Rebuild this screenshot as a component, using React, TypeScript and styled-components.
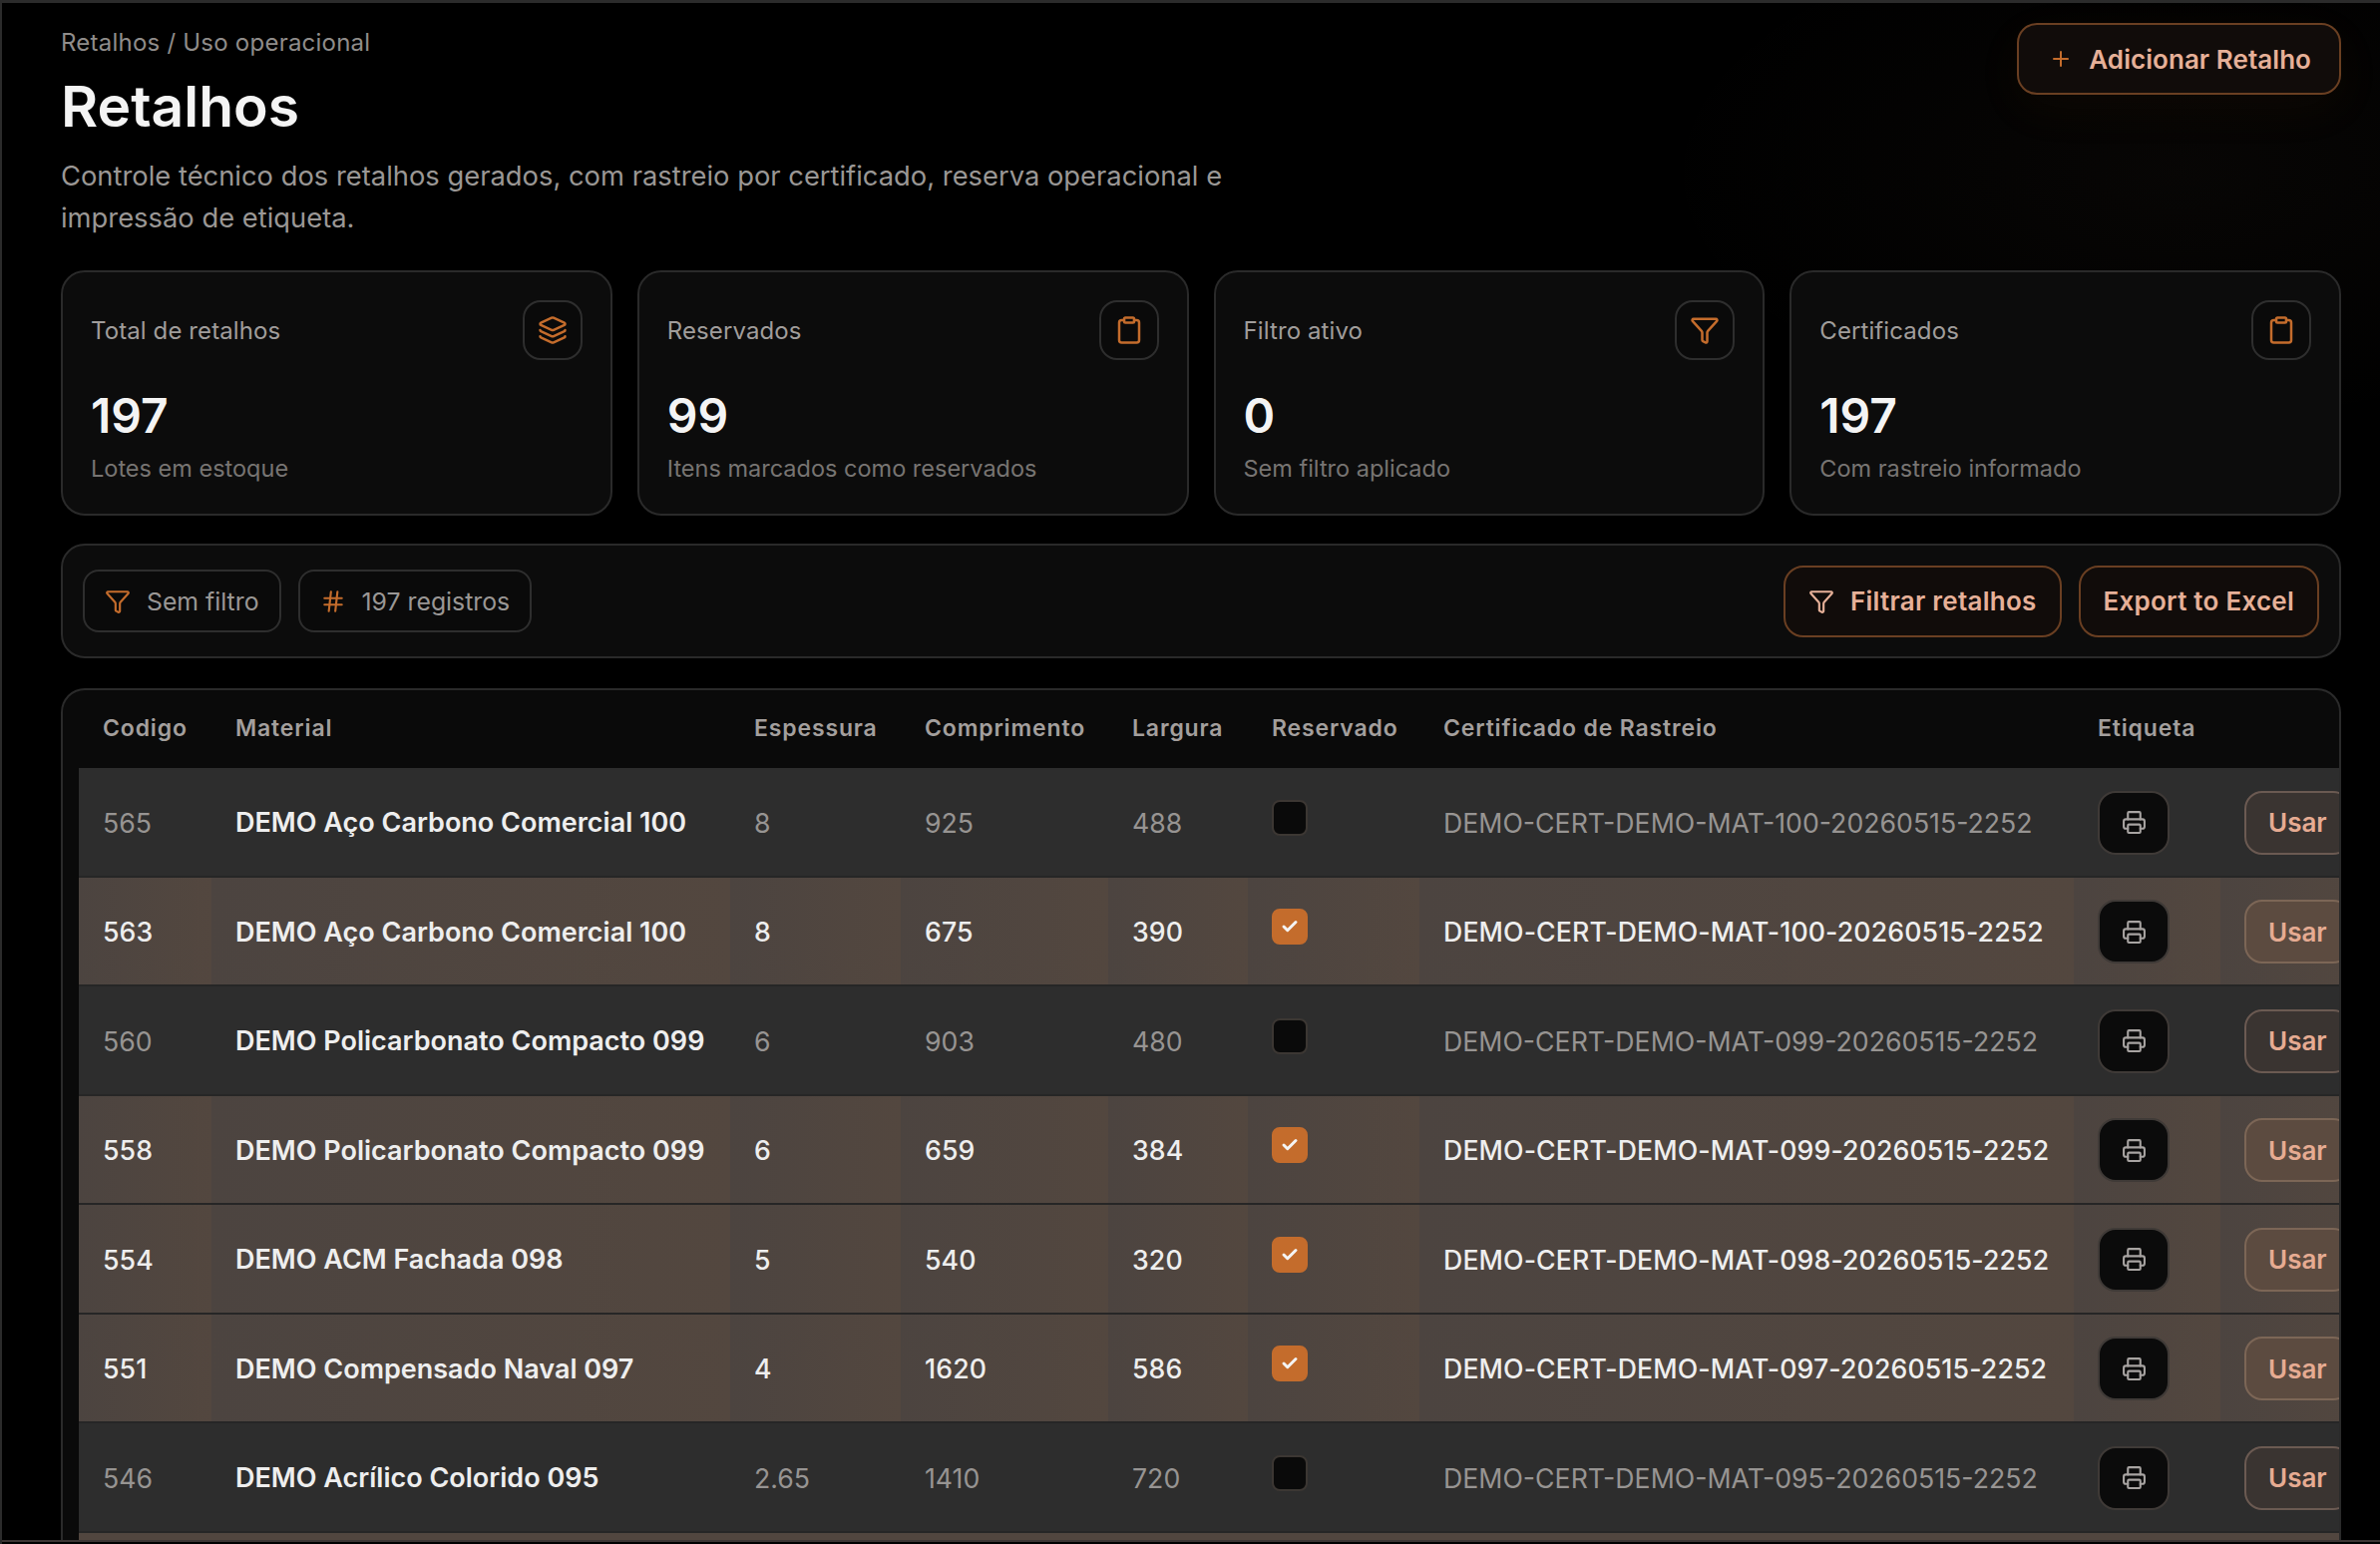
import React from 'react';
import styled, { createGlobalStyle } from 'styled-components';
import { Check, Clipboard, Funnel, Hash, Layers, Plus, Printer } from 'lucide-react';

interface Retalho {
  code: number;
  material: string;
  thickness: string;
  length: number;
  width: number;
  reserved: boolean;
  certificate: string;
}

const retalhos: Retalho[] = [
  { code: 565, material: 'DEMO Aço Carbono Comercial 100', thickness: '8', length: 925, width: 488, reserved: false, certificate: 'DEMO-CERT-DEMO-MAT-100-20260515-2252' },
  { code: 563, material: 'DEMO Aço Carbono Comercial 100', thickness: '8', length: 675, width: 390, reserved: true, certificate: 'DEMO-CERT-DEMO-MAT-100-20260515-2252' },
  { code: 560, material: 'DEMO Policarbonato Compacto 099', thickness: '6', length: 903, width: 480, reserved: false, certificate: 'DEMO-CERT-DEMO-MAT-099-20260515-2252' },
  { code: 558, material: 'DEMO Policarbonato Compacto 099', thickness: '6', length: 659, width: 384, reserved: true, certificate: 'DEMO-CERT-DEMO-MAT-099-20260515-2252' },
  { code: 554, material: 'DEMO ACM Fachada 098', thickness: '5', length: 540, width: 320, reserved: true, certificate: 'DEMO-CERT-DEMO-MAT-098-20260515-2252' },
  { code: 551, material: 'DEMO Compensado Naval 097', thickness: '4', length: 1620, width: 586, reserved: true, certificate: 'DEMO-CERT-DEMO-MAT-097-20260515-2252' },
  { code: 546, material: 'DEMO Acrílico Colorido 095', thickness: '2.65', length: 1410, width: 720, reserved: false, certificate: 'DEMO-CERT-DEMO-MAT-095-20260515-2252' },
];

const stats = [
  { label: 'Total de retalhos', value: '197', note: 'Lotes em estoque', icon: Layers },
  { label: 'Reservados', value: '99', note: 'Itens marcados como reservados', icon: Clipboard },
  { label: 'Filtro ativo', value: '0', note: 'Sem filtro aplicado', icon: Funnel },
  { label: 'Certificados', value: '197', note: 'Com rastreio informado', icon: Clipboard },
];

const columns = [
  { title: 'Codigo', width: 133 },
  { title: 'Material', width: 520 },
  { title: 'Espessura', width: 171 },
  { title: 'Comprimento', width: 208 },
  { title: 'Largura', width: 140 },
  { title: 'Reservado', width: 172 },
  { title: 'Certificado de Rastreio', width: 656 },
  { title: 'Etiqueta', width: 147 },
  { title: '', width: 153 },
];

const GlobalStyle = createGlobalStyle`
  html, body {
    margin: 0;
    background: #000000;
  }

  * {
    box-sizing: border-box;
  }
`;

const Page = styled.div`
  position: relative;
  height: 100vh;
  overflow: hidden;
  padding: 20px 39px 0 59px;
  border-top: 3px solid #2b2b2b;
  border-left: 2px solid #2b2b2b;
  font-family: 'Inter', sans-serif;
  background:
    radial-gradient(ellipse 520px 260px at 2180px 170px, rgba(190, 150, 120, 0.04), transparent),
    #000000;
`;

const BottomEdge = styled.div`
  position: absolute;
  left: 0;
  right: 0;
  bottom: 0;
  height: 4px;
  border-top: 2px solid #3d3534;
  background: #000000;
`;

const Header = styled.header`
  display: flex;
  justify-content: space-between;
  align-items: flex-start;
`;

const Breadcrumb = styled.div`
  margin-top: 4px;
  font-size: 24px;
  line-height: 32px;
  letter-spacing: 0.23px;
  color: #8f8c8a;
`;

const Title = styled.h1`
  margin: 16px 0 17px;
  font-size: 57px;
  line-height: 64px;
  font-weight: 600;
  color: #f4f4f4;
`;

const Description = styled.p`
  margin: 0;
  max-width: 1240px;
  font-size: 27.35px;
  line-height: 42px;
  color: #9a9795;
`;

const OutlineButton = styled.button`
  display: flex;
  align-items: center;
  gap: 16px;
  height: 72px;
  padding: 0 23px;
  border: 2px solid #6a3f22;
  border-radius: 20px;
  background: #110c0a;
  color: #e6b098;
  font-family: 'Inter', sans-serif;
  font-size: 26px;
  font-weight: 600;
  letter-spacing: 0.25px;
  white-space: nowrap;
`;

const AddButton = styled(OutlineButton)`
  padding: 0 28px 0 30px;
  letter-spacing: 0.05px;
  box-shadow: 0 14px 50px rgba(196, 108, 44, 0.05);

  svg {
    color: #c46c2c;
  }
`;

const StatsGrid = styled.section`
  display: grid;
  grid-template-columns: repeat(4, 1fr);
  gap: 25px;
  margin-top: 31px;
`;

const StatCard = styled.article`
  height: 246px;
  padding: 28px;
  border: 2px solid #2a2a2a;
  border-radius: 24px;
  background: #0c0c0c;
`;

const StatTop = styled.div`
  display: flex;
  justify-content: space-between;
  align-items: center;
`;

const StatLabel = styled.span`
  font-size: 24px;
  letter-spacing: 0.1px;
  color: #a09d9b;
`;

const StatIcon = styled.div`
  display: flex;
  align-items: center;
  justify-content: center;
  width: 60px;
  height: 60px;
  border: 2px solid #2e2e2e;
  border-radius: 18px;
  background: #0a0a0a;
  color: #c46c2c;
`;

const StatValue = styled.div`
  margin-top: 28px;
  font-size: 48px;
  line-height: 56px;
  font-weight: 600;
  color: #f4f4f4;
`;

const StatNote = styled.div`
  margin-top: 9px;
  font-size: 23.5px;
  line-height: 32px;
  color: #777472;
`;

const Toolbar = styled.section`
  display: flex;
  justify-content: space-between;
  align-items: center;
  height: 115px;
  margin-top: 28px;
  padding: 0 20px;
  border: 2px solid #2a2a2a;
  border-radius: 24px;
  background: #0c0c0c;
`;

const ToolbarGroup = styled.div`
  display: flex;
  align-items: center;
  gap: 17px;
`;

const Chip = styled.div`
  display: flex;
  align-items: center;
  gap: 16px;
  height: 63px;
  padding: 0 20px;
  border: 2px solid #2e2e2e;
  border-radius: 16px;
  background: #0a0a0a;
  color: #9a9795;
  font-size: 24.8px;

  svg {
    color: #c46c2c;
  }
`;

const TablePanel = styled.section`
  margin-top: 30px;
  padding-left: 16px;
  overflow: hidden;
  border: 2px solid #2a2a2a;
  border-bottom: 0;
  border-radius: 24px 24px 0 0;
  background: #0a0a0a;
`;

const Table = styled.table`
  width: 2300px;
  table-layout: fixed;
  border-collapse: separate;
  border-spacing: 0;
`;

const HeadCell = styled.th`
  height: 78px;
  padding: 0 24px 2px;
  text-align: left;
  font-size: 23px;
  font-weight: 600;
  letter-spacing: 0.85px;
  color: #a39f9d;
  white-space: nowrap;
`;

const Cell = styled.td<{ $reserved: boolean; $strong?: boolean }>`
  height: 109.5px;
  padding: 2px 24px 0;
  border-bottom: 2px solid #262626;
  background: ${({ $reserved }) =>
    $reserved ? 'linear-gradient(90deg, #4c4440, #53473f)' : '#2d2d2d'};
  font-size: ${({ $strong }) => ($strong ? '27px' : '26.7px')};
  font-weight: ${({ $strong, $reserved }) => ($strong ? 600 : $reserved ? 500 : 400)};
  letter-spacing: ${({ $strong, $reserved }) => (!$strong && $reserved ? '0.12px' : '0')};
  color: ${({ $reserved, $strong }) => ($reserved || $strong ? '#eeeeee' : '#979492')};
  white-space: nowrap;
`;

const CheckMark = styled.span<{ $checked: boolean }>`
  display: flex;
  align-items: center;
  justify-content: center;
  width: 36px;
  height: 36px;
  margin-top: -10px;
  border: 2px solid ${({ $checked }) => ($checked ? '#c46c2c' : '#3c3733')};
  border-radius: 8px;
  background: ${({ $checked }) => ($checked ? '#c46c2c' : '#0a0a0a')};
  color: #f4f4f4;
`;

const PrintButton = styled.button`
  display: flex;
  align-items: center;
  justify-content: center;
  width: 72px;
  height: 64px;
  padding: 0;
  border: 2px solid #3f3a37;
  border-radius: 18px;
  background: #0b0b0b;
  color: #a8a4a2;
`;

const UseButton = styled.button<{ $reserved: boolean }>`
  height: 64px;
  padding: 0 22px;
  border: 2px solid ${({ $reserved }) => ($reserved ? '#7c6656' : '#6b5a52')};
  border-radius: 18px;
  background: ${({ $reserved }) => ($reserved ? '#5c4b40' : '#3a3431')};
  color: #e6ab92;
  font-family: 'Inter', sans-serif;
  font-size: 26px;
  font-weight: 600;
`;

const PeekRow = styled.td`
  height: 60px;
  background: #51463f;
`;

const App: React.FC = () => {
  return (
    <Page>
      <GlobalStyle />
      <Header>
        <div>
          <Breadcrumb>Retalhos / Uso operacional</Breadcrumb>
          <Title>Retalhos</Title>
          <Description>
            Controle técnico dos retalhos gerados, com rastreio por certificado, reserva operacional e impressão de etiqueta.
          </Description>
        </div>
        <AddButton>
          <Plus size={24} strokeWidth={2} />
          Adicionar Retalho
        </AddButton>
      </Header>

      <StatsGrid>
        {stats.map(({ label, value, note, icon: Icon }) => (
          <StatCard key={label}>
            <StatTop>
              <StatLabel>{label}</StatLabel>
              <StatIcon>
                <Icon size={30} strokeWidth={2} />
              </StatIcon>
            </StatTop>
            <StatValue>{value}</StatValue>
            <StatNote>{note}</StatNote>
          </StatCard>
        ))}
      </StatsGrid>

      <Toolbar>
        <ToolbarGroup>
          <Chip>
            <Funnel size={26} strokeWidth={2} />
            Sem filtro
          </Chip>
          <Chip>
            <Hash size={26} strokeWidth={2} />
            197 registros
          </Chip>
        </ToolbarGroup>
        <ToolbarGroup>
          <OutlineButton>
            <Funnel size={26} strokeWidth={2} />
            Filtrar retalhos
          </OutlineButton>
          <OutlineButton>Export to Excel</OutlineButton>
        </ToolbarGroup>
      </Toolbar>

      <TablePanel>
        <Table>
          <colgroup>
            {columns.map((column, index) => (
              <col key={index} style={{ width: column.width }} />
            ))}
          </colgroup>
          <thead>
            <tr>
              {columns.map((column, index) => (
                <HeadCell key={index}>{column.title}</HeadCell>
              ))}
            </tr>
          </thead>
          <tbody>
            {retalhos.map((item) => (
              <tr key={item.code}>
                <Cell $reserved={item.reserved}>{item.code}</Cell>
                <Cell $reserved={item.reserved} $strong>{item.material}</Cell>
                <Cell $reserved={item.reserved}>{item.thickness}</Cell>
                <Cell $reserved={item.reserved}>{item.length}</Cell>
                <Cell $reserved={item.reserved}>{item.width}</Cell>
                <Cell $reserved={item.reserved}>
                  <CheckMark $checked={item.reserved}>
                    {item.reserved && <Check size={18} strokeWidth={4} />}
                  </CheckMark>
                </Cell>
                <Cell $reserved={item.reserved}>{item.certificate}</Cell>
                <Cell $reserved={item.reserved}>
                  <PrintButton>
                    <Printer size={25} strokeWidth={2} />
                  </PrintButton>
                </Cell>
                <Cell $reserved={item.reserved}>
                  <UseButton $reserved={item.reserved}>Usar</UseButton>
                </Cell>
              </tr>
            ))}
            <tr>
              <PeekRow colSpan={columns.length} />
            </tr>
          </tbody>
        </Table>
      </TablePanel>
      <BottomEdge />
    </Page>
  );
};

export default App;
